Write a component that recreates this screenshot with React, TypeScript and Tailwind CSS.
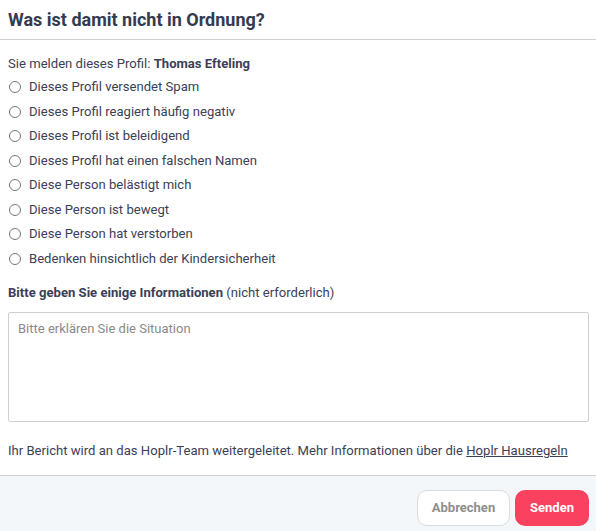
import React from "react";

const options = [
  "Dieses Profil versendet Spam",
  "Dieses Profil reagiert häufig negativ",
  "Dieses Profil ist beleidigend",
  "Dieses Profil hat einen falschen Namen",
  "Diese Person belästigt mich",
  "Diese Person ist bewegt",
  "Diese Person hat verstorben",
  "Bedenken hinsichtlich der Kindersicherheit",
];

export default function App() {
  return (
    <div className="w-[596px] h-[531px] bg-white flex flex-col text-[#3b4056]" style={{ fontFamily: "Roboto, 'Liberation Sans', sans-serif" }}>
      <div className="h-[40px] border-b border-[#d0d0d0] flex items-center px-[8px]">
        <h1 className="text-[18px] font-bold text-[#343a50] leading-none">Was ist damit nicht in Ordnung?</h1>
      </div>
      <div className="flex-1 flex flex-col px-[8px] pt-[15px] text-[13.1px]">
        <div className="leading-[17px]">
          Sie melden dieses Profil: <span className="font-bold">Thomas Efteling</span>
        </div>
        <div className="flex flex-col mt-[3px]">
          {options.map((o) => (
            <label key={o} className="flex items-center h-[24.5px]">
              <input type="radio" name="reason" className="m-0 ml-[1px] w-[12px] h-[12px] accent-[#555]" />
              <span className="ml-[8px]">{o}</span>
            </label>
          ))}
        </div>
        <div className="mt-[13px] leading-[17px]">
          <span className="font-bold">Bitte geben Sie einige Informationen</span> (nicht erforderlich)
        </div>
        <textarea
          placeholder="Bitte erklären Sie die Situation"
          className="mt-[11px] w-[581px] h-[110px] border border-[#cfcfcf] rounded-[2px] px-[9px] py-[6px] text-[13px] resize-none outline-none placeholder:text-[#8a8a8a]"
        />
        <div className="mt-[20px] leading-[17px]">
          Ihr Bericht wird an das Hoplr-Team weitergeleitet. Mehr Informationen über die{" "}
          <a className="underline">Hoplr Hausregeln</a>
        </div>
      </div>
      <div className="h-[56px] border-t border-[#d0d0d0] bg-[#f4f7fa] flex items-start justify-end gap-[5px] pr-[7px] pt-[14px]">
        <button className="w-[93px] h-[36px] rounded-[10px] border border-[#dcdcdc] bg-white text-[13px] font-bold text-[#8e8e8e]">Abbrechen</button>
        <button className="w-[74px] h-[36px] rounded-[10px] bg-[#fb4160] text-[13px] font-bold text-white">Senden</button>
      </div>
    </div>
  );
}
